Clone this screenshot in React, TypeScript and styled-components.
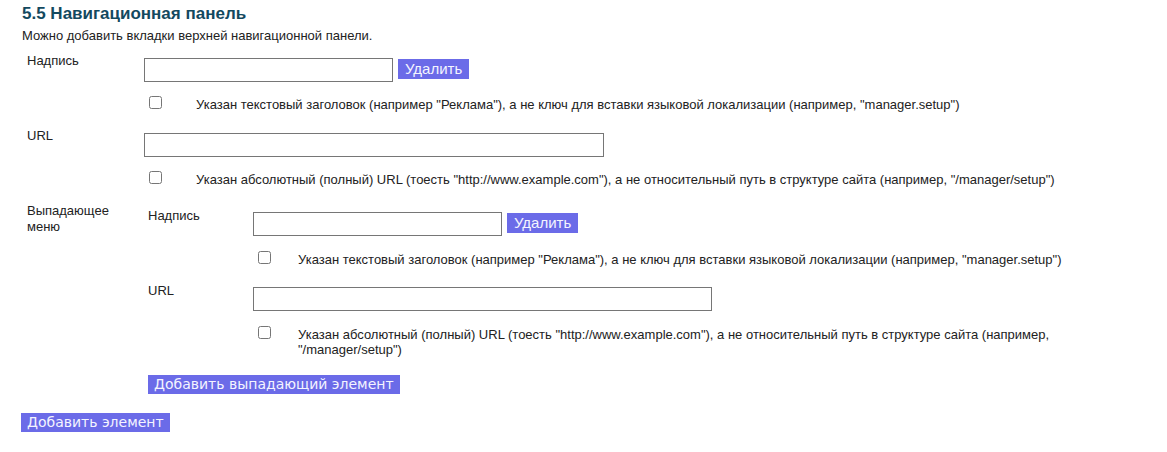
import { FC } from "react";
import styled, { createGlobalStyle } from "styled-components";

const GlobalStyle = createGlobalStyle`
  body {
    margin: 0;
    background: #fff;
    font-family: "Liberation Sans", Arial, sans-serif;
    color: #222;
  }
`;

type CheckRowProps = { text: string; nested?: boolean };

const CheckRow: FC<CheckRowProps> = ({ text, nested }) => (
  <Check $nested={nested}>
    <Box type="checkbox" />
    <CheckText>{text}</CheckText>
  </Check>
);

const TITLE_HINT =
  'Указан текстовый заголовок (например "Реклама"), а не ключ для вставки языковой локализации (например, "manager.setup")';
const URL_HINT =
  'Указан абсолютный (полный) URL (тоесть "http://www.example.com"), а не относительный путь в структуре сайта (например, "/manager/setup")';

export default function App() {
  return (
    <Page>
      <GlobalStyle />
      <Title>5.5 Навигационная панель</Title>
      <Description>Можно добавить вкладки верхней навигационной панели.</Description>
      <Form>
        <Label>Надпись</Label>
        <Field>
          <InputRow>
            <TextInput $width={249} />
            <Button>Удалить</Button>
          </InputRow>
          <CheckRow text={TITLE_HINT} />
        </Field>

        <Label>URL</Label>
        <Field>
          <InputRow>
            <TextInput $width={460} />
          </InputRow>
          <CheckRow text={URL_HINT} />
        </Field>

        <Label $multi>Выпадающее меню</Label>
        <Field>
          <SubForm>
            <SubLabel>Надпись</SubLabel>
            <Field>
              <InputRow $nested>
                <TextInput $width={249} />
                <Button>Удалить</Button>
              </InputRow>
              <CheckRow text={TITLE_HINT} nested />
            </Field>
            <SubLabel>URL</SubLabel>
            <Field>
              <InputRow $nested>
                <TextInput $width={459} />
              </InputRow>
              <CheckRow text={URL_HINT} nested />
            </Field>
          </SubForm>
          <AddButton $sub>Добавить выпадающий элемент</AddButton>
        </Field>
      </Form>
      <AddButton>Добавить элемент</AddButton>
    </Page>
  );
}

const Page = styled.div`
  width: 1110px;
  padding: 5px 0 0 22px;
`;

const Title = styled.h3`
  margin: 0;
  font-size: 17px;
  line-height: 18px;
  font-weight: bold;
  color: #13495f;
`;

const Description = styled.p`
  margin: 6px 0 0;
  font-size: 13px;
  line-height: 14px;
`;

const Form = styled.div`
  display: grid;
  grid-template-columns: 122px 1fr;
  margin-top: 10px;
`;

const Label = styled.div<{ $multi?: boolean }>`
  padding-left: 5px;
  font-size: 13px;
  line-height: ${({ $multi }) => ($multi ? "16px" : "15px")};
  width: ${({ $multi }) => ($multi ? "90px" : "auto")};
`;

const Field = styled.div`
  display: flex;
  flex-direction: column;
`;

const SubForm = styled.div`
  display: grid;
  grid-template-columns: 109px 1fr;
`;

const SubLabel = styled.div`
  padding: 5px 0 0 4px;
  font-size: 13px;
  line-height: 15px;
`;

const InputRow = styled.div<{ $nested?: boolean }>`
  display: flex;
  align-items: flex-start;
  gap: 5px;
  padding-top: ${({ $nested }) => ($nested ? "9px" : "5px")};
`;

const TextInput = styled.input.attrs({ type: "text" })<{ $width: number }>`
  box-sizing: border-box;
  width: ${({ $width }) => $width}px;
  height: 24px;
  margin: 0;
  border: 1px solid #767676;
  border-radius: 0;
  background: #fff;
`;

const Button = styled.button`
  margin-top: 1px;
  height: 20px;
  padding: 0 7px;
  border: none;
  border-radius: 0;
  background: #6b6be8;
  color: #f4f4ff;
  font-family: "Liberation Sans", Arial, sans-serif;
  font-size: 15px;
  line-height: 20px;
`;

const Check = styled.label<{ $nested?: boolean }>`
  display: grid;
  grid-template-columns: ${({ $nested }) => ($nested ? "40px" : "47px")} 1fr;
  margin: ${({ $nested }) => ($nested ? "15px 0 11px" : "14px 0 16px")};
  padding-left: 5px;
  font-size: 13px;
  line-height: 15px;
`;

const Box = styled.input`
  width: 13px;
  height: 13px;
  margin: 0;
`;

const CheckText = styled.span`
  padding-top: 1px;
`;

const AddButton = styled.button<{ $sub?: boolean }>`
  align-self: flex-start;
  margin: ${({ $sub }) => ($sub ? "7px 0 0 4px" : "19px 0 0 -1px")};
  height: 19px;
  padding: 0 6px;
  border: none;
  border-radius: 0;
  background: #6b6be8;
  color: #f4f4ff;
  font-family: "DejaVu Sans", Verdana, sans-serif;
  font-size: 14px;
  line-height: 19px;
`;
